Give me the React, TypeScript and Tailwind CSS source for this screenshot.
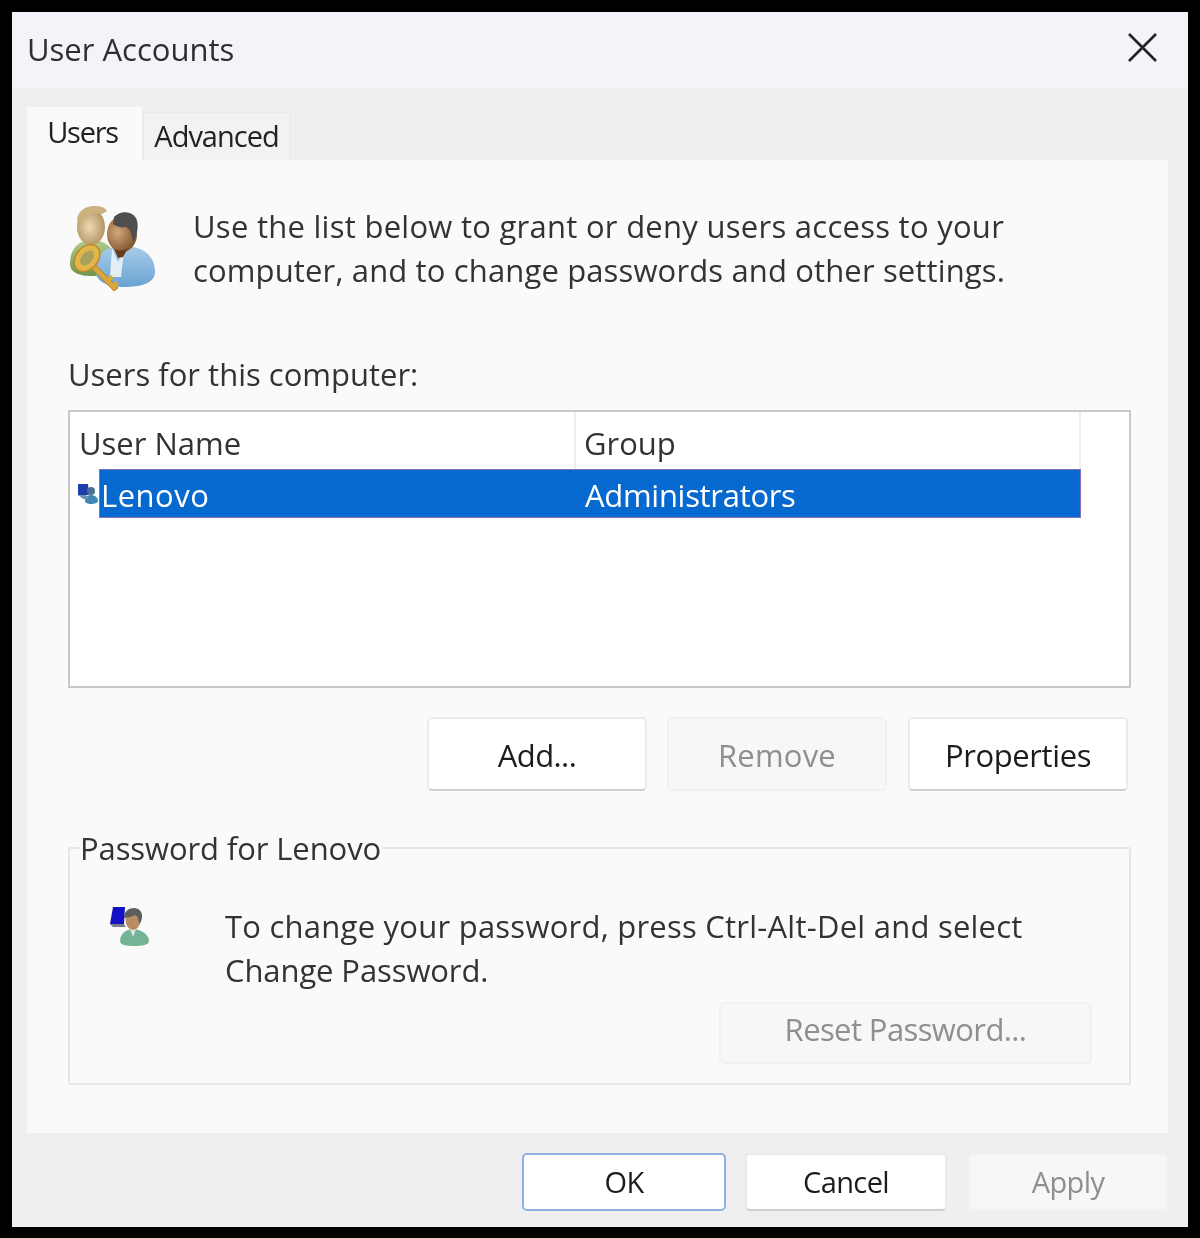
const font = "font-['Open_Sans',_'Noto_Sans',sans-serif]";

function UsersKeyIcon() {
  return (
    <svg width="92" height="90" viewBox="0 0 92 90" className="shrink-0">
      <defs>
        <radialGradient id="skinA" cx="0.45" cy="0.5" r="0.7">
          <stop offset="0" stopColor="#ecd9b4" />
          <stop offset="1" stopColor="#a5824f" />
        </radialGradient>
        <radialGradient id="skinB" cx="0.35" cy="0.45" r="0.75">
          <stop offset="0" stopColor="#d3a878" />
          <stop offset="1" stopColor="#6f4320" />
        </radialGradient>
        <linearGradient id="shirtB" x1="0" y1="0" x2="0" y2="1">
          <stop offset="0" stopColor="#a9cdea" />
          <stop offset="1" stopColor="#6aa3d2" />
        </linearGradient>
        <linearGradient id="shirtA" x1="0" y1="0" x2="0" y2="1">
          <stop offset="0" stopColor="#b4cc8a" />
          <stop offset="1" stopColor="#6d9550" />
        </linearGradient>
      </defs>
      <path d="M2 60c0-16 9-24 22-24s24 8 24 24c0 9-12 12-24 12S2 69 2 60z" fill="url(#shirtA)" />
      <ellipse cx="23" cy="23" rx="14" ry="18" fill="url(#skinA)" />
      <path d="M9 17C9 7 18 2 26 2c6 0 11 1 13 5l-5 3c-8-2-16 0-21 8z" fill="#c9b27e" />
      <path d="M27 66c0-16 11-24 29-24 18 0 31 9 31 26 0 11-14 15-31 15S27 77 27 66z" fill="url(#shirtB)" />
      <path d="M44 44l6 14 6-12-3 27H42z" fill="#e4eef5" />
      <ellipse cx="54" cy="30" rx="15" ry="18" fill="url(#skinB)" />
      <path d="M46 13c6-7 18-6 22 1 3 6 2 16-3 23-1-7-3-12-7-14-4 1-9 0-13-3z" fill="#4f4f4f" />
      <path d="M46 45c4 2 11 2 14-1l-5 9-5 1z" fill="#6a3c1a" />
      <path d="M25 58l25 26-4 3-25-25z" fill="#d9a63c" stroke="#b48326" strokeWidth="1" />
      <path d="M38 75l5-4 3 3-5 4zM44 81l4-4 3 3-4 4z" fill="#d9a63c" />
      <ellipse cx="19" cy="54" rx="11" ry="15" transform="rotate(40 19 54)" fill="#e3b64c" stroke="#b98a2c" strokeWidth="1.5" />
      <ellipse cx="19" cy="54" rx="5.5" ry="8.5" transform="rotate(40 19 54)" fill="#a9a05e" />
    </svg>
  );
}

function ListUserIcon() {
  return (
    <svg width="22" height="22" viewBox="0 0 22 22" className="shrink-0">
      <path d="M1 1h10l1 11H1z" fill="#1d3fae" />
      <circle cx="14" cy="8" r="4" fill="#4a6f92" />
      <path d="M8 18c0-4 3-6 6-6s7 2 7 6c0 2-4 3-7 3s-6-1-6-3z" fill="#3f86b3" />
      <path d="M1 12h8l3 4H6z" fill="#6f8fb0" />
    </svg>
  );
}

function PasswordUserIcon() {
  return (
    <svg width="44" height="44" viewBox="0 0 44 44" className="mt-[2px] shrink-0">
      <path d="M4 2h12l-1 17H1z" fill="#1212c4" />
      <path d="M1 19h14l2 3H4z" fill="#7a7a8c" />
      <path d="M11 36c0-7 6-12 13-12s16 5 16 12c0 4-7 5-15 5s-14-1-14-5z" fill="#74b394" />
      <path d="M21 24l3 8 3-8z" fill="#d9ece2" />
      <ellipse cx="24" cy="15" rx="7.5" ry="10" fill="#b98d62" />
      <path d="M15 13c0-7 5-10 10-10s9 4 8 10c-1 3-1 5-3 6 0-5-1-8-4-9-3 2-7 2-11 3z" fill="#5e5e5e" />
    </svg>
  );
}

function DialogButton({
  label,
  disabled,
  primary,
  className,
}: {
  label: string;
  disabled?: boolean;
  primary?: boolean;
  className: string;
}) {
  let look = "bg-white border-[#ebebeb] border-b-[#cfcfcf] text-[#1c1c1c]";
  if (disabled) look = "bg-[#f7f7f7] border-[#f1f1f1] text-[#8f8f8f]";
  if (primary) look = "bg-white border-[#8fb2dc] text-[#1c1c1c]";
  return (
    <button className={`flex items-center justify-center rounded-[5px] border-2 ${look} ${className}`}>
      {label}
    </button>
  );
}

export default function App() {
  return (
    <div className={`w-[1200px] h-[1238px] bg-black pt-3 pb-[11px] px-3 ${font}`}>
      <div className="flex h-full flex-col bg-[#efefef] text-[#222] blur-[0.6px]">
        <div className="flex h-[76px] shrink-0 items-center justify-between bg-[#f3f3f9] pl-[15px] pr-[31px]">
          <span className="mb-[2px] text-[31px] text-[#2e2e2e]">User Accounts</span>
          <svg width="30" height="30" viewBox="0 0 30 30" className="mb-[5px]">
            <path d="M2 1l27 27M29 1L2 28" stroke="#222" strokeWidth="2.6" fill="none" />
          </svg>
        </div>

        <div className="ml-[15px] mr-5 mt-[19px] flex h-[53px] items-end">
          <div className="flex h-[53px] w-[115px] justify-center bg-[#fafafa] pr-[4px] pt-[6px] text-[29px] tracking-[-1.3px] leading-[38px]">
            Users
          </div>
          <div className="flex h-[49px] w-[149px] justify-center border-x-2 border-t-2 border-[#ebebeb] bg-[#f2f2f2] pt-[4px] text-[29px] tracking-[-1px] leading-[38px]">
            Advanced
          </div>
        </div>

        <div className="ml-[15px] mr-5 flex h-[973px] flex-col bg-[#fafafa] pl-[41px] pr-[37px]">
          <div className="mt-[44px] flex items-start">
            <UsersKeyIcon />
            <p className="ml-[33px] w-[880px] text-[31px] leading-[44px] text-[#333]">
              <span className="tracking-[0.27px]">Use the list below to grant or deny users access to your</span>
              <br />
              <span className="tracking-[0.14px]">computer, and to change passwords and other settings.</span>
            </p>
          </div>

          <div className="mt-[58px] text-[31px] leading-[44px] text-[#333]">Users for this computer:</div>

          <div className="mt-[14px] h-[278px] w-[1063px] border-2 border-[#c9c9c9] bg-white">
            <div className="flex h-[57px] w-[1011px] text-[31px] text-[#333]">
              <div className="flex w-[506px] items-center border-r-2 border-[#eeeeee] pl-[9px] pt-[6px]">User Name</div>
              <div className="flex flex-1 items-center border-r-2 border-[#eeeeee] pl-[8px] pt-[6px]">Group</div>
            </div>
            <div className="flex h-[49px] items-center">
              <div className="flex w-[29px] justify-end">
                <ListUserIcon />
              </div>
              <div className="flex h-full w-[982px] items-center border border-[#8b6fb8] bg-[#0669cf] text-[31px] text-white">
                <span className="w-[485px] pl-[1px] pt-[3px] tracking-[0.5px]">Lenovo</span>
                <span className="pt-[3px] tracking-[-0.3px]">Administrators</span>
              </div>
            </div>
          </div>

          <div className="mt-[29px] flex justify-end gap-5 pr-[3px]">
            <DialogButton label="Add..." className="h-[74px] w-[220px] pt-[3px] text-[31px] tracking-[-0.6px]" />
            <DialogButton label="Remove" disabled className="h-[74px] w-[220px] pt-[3px] text-[31px] tracking-[0.2px]" />
            <DialogButton label="Properties" className="ml-[1px] h-[74px] w-[220px] pt-[3px] text-[31px] tracking-[-0.4px]" />
          </div>

          <fieldset className="mt-[38px] h-[256px] w-[1063px] rounded-[2px] border-2 border-[#e6e6e6] pl-[9px]">
            <legend className="px-[1px] text-[31px] leading-[38px] tracking-[-0.1px] text-[#333]">Password for Lenovo</legend>
            <div className="ml-[30px] mt-[36px] flex items-start">
              <PasswordUserIcon />
              <p className="ml-[72px] mt-[1px] text-[31px] leading-[44px] text-[#333]">
                <span className="tracking-[0.24px]">To change your password, press Ctrl-Alt-Del and select</span>
                <br />
                <span className="tracking-[-0.1px]">Change Password.</span>
              </p>
            </div>
            <div className="mr-[37px] mt-[10px] flex justify-end">
              <DialogButton label="Reset Password..." disabled className="h-[62px] w-[373px] pb-[8px] text-[31px] tracking-[-0.6px]" />
            </div>
          </fieldset>
        </div>

        <div className="mr-5 mt-5 flex justify-end">
          <DialogButton label="OK" primary className="h-[58px] w-[204px] text-[29px] tracking-[-0.6px]" />
          <DialogButton label="Cancel" className="ml-[19px] h-[58px] w-[202px] text-[29px] tracking-[-0.6px]" />
          <DialogButton label="Apply" disabled className="ml-[21px] h-[58px] w-[200px] text-[29px] tracking-[-0.6px]" />
        </div>
      </div>
    </div>
  );
}
